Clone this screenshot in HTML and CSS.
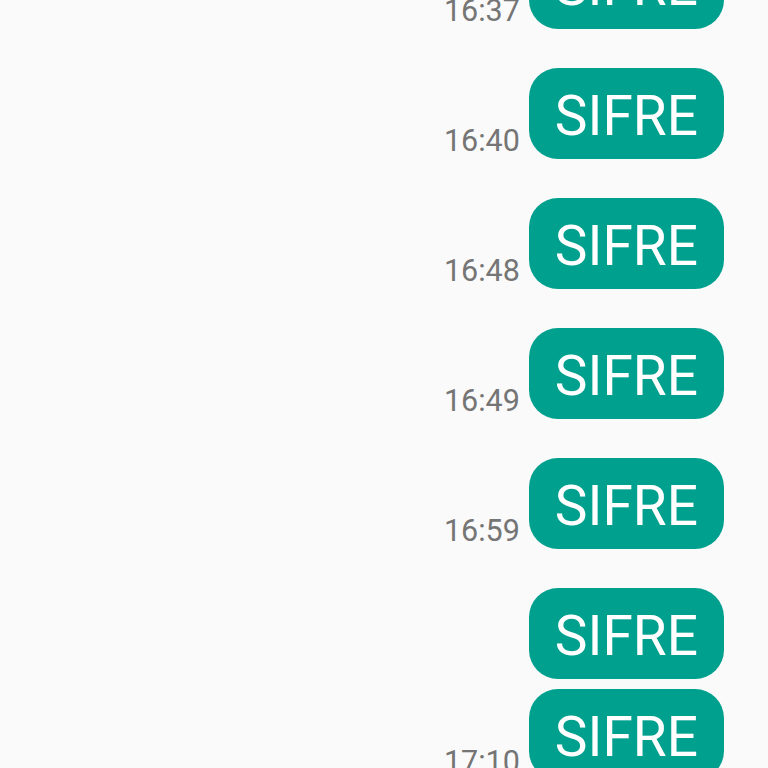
FILE: index.html
```html
<!DOCTYPE html>
<html>
<head>
<meta charset="utf-8">
<link rel="stylesheet" href="styles.css">
</head>
<body>
<div class="chat">
  <div class="row"><span class="time">16:37</span><div class="bubble">SIFRE</div></div>
  <div class="row"><span class="time">16:40</span><div class="bubble">SIFRE</div></div>
  <div class="row"><span class="time">16:48</span><div class="bubble">SIFRE</div></div>
  <div class="row"><span class="time">16:49</span><div class="bubble">SIFRE</div></div>
  <div class="row"><span class="time">16:59</span><div class="bubble">SIFRE</div></div>
  <div class="row"><div class="bubble">SIFRE</div></div>
  <div class="row grouped"><span class="time">17:10</span><div class="bubble">SIFRE</div></div>
</div>
</body>
</html>
```
FILE: styles.css
```css
html, body {
  margin: 0;
  padding: 0;
  background: #fafafa;
  height: 768px;
  overflow: hidden;
}
.chat {
  display: flex;
  flex-direction: column;
  gap: 39px;
  margin-top: -62px;
  padding-right: 44px;
  font-family: Roboto, "Noto Sans", sans-serif;
}
.row {
  display: flex;
  justify-content: flex-end;
  align-items: flex-end;
  gap: 9px;
}
.row.grouped {
  margin-top: -29px;
}
.time {
  font-size: 30.5px;
  line-height: 1;
  color: #757575;
  margin-bottom: 3px;
}
.bubble {
  height: 91px;
  box-sizing: border-box;
  padding: 5px 26px 0;
  display: flex;
  align-items: center;
  background: #00a08e;
  color: #ffffff;
  border-radius: 29px;
  font-size: 55px;
  line-height: 1;
}
```
